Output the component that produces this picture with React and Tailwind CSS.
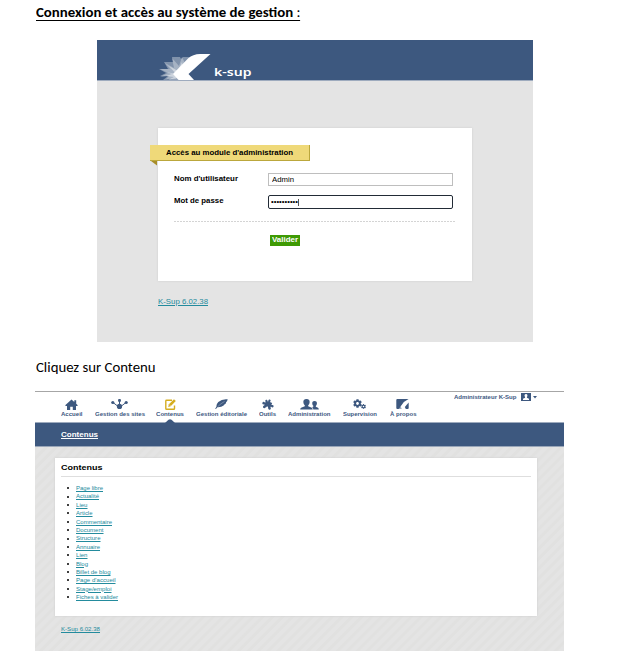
import { useLayoutEffect, useRef, useState } from "react";
import { FaCog } from "react-icons/fa";

// Text stretched or condensed horizontally to a given width.
function Fit({ width, className = "", children }) {
  const ref = useRef(null);
  const [scale, setScale] = useState(1);
  useLayoutEffect(() => {
    const el = ref.current;
    const previous = el.style.transform;
    el.style.transform = "none";
    const natural = el.getBoundingClientRect().width;
    el.style.transform = previous;
    if (natural) setScale(width / natural);
  }, [width]);
  return (
    <span className={"block whitespace-nowrap " + className} style={{ width }}>
      <span ref={ref} className="inline-block origin-left" style={{ transform: `scaleX(${scale})` }}>
        {children}
      </span>
    </span>
  );
}

function Logo() {
  return (
    <svg viewBox="0 0 54 27" className="h-[27px] w-[54px]">
      <g fill="#fff">
        <path opacity=".35" d="M14 4H22l1 2 2-2h7l-1 6-8 14-14 3H5l5-4-8 0 6-3-7-4 9 0L6 9h9z" />
        <path opacity=".3" d="M14 5 21 13 24 4 27 10 31 5 29 14 18 26H8l3-3-9 1 8-4-8-4 10 0L7 10l9 5z" />
        <path opacity=".45" d="M18 21 11 13l9 5 4-9 2 10-6 8H10l6-3-8-1 6-2-6-2z" />
        <path d="M15 21 30 5.500Q35 1 42 1H52.500L30.500 21 36 27H20.500z" />
      </g>
    </svg>
  );
}

function HomeIcon() {
  return (
    <svg viewBox="0 0 13 11" className="h-[11px] w-[13px]" fill="#3d587f">
      <path d="M6.500.5 9.300 3V1.200h1.900v3.500L12.800 6.200 12.300 7H11v4H7.800V7.800H5.200V11H2V7H.7L.2 6.200z" />
    </svg>
  );
}

function EditIcon() {
  return (
    <svg viewBox="0 0 11 11" className="h-[11px] w-[11px]">
      <path d="M7 1.200H1.500Q.8 1.200.8 1.900V9.400Q.8 10.200 1.500 10.200H8.700Q9.500 10.200 9.500 9.400V6.500" fill="none" stroke="#d5ad20" strokeWidth="1.400" />
      <path d="M9 .200 10.800 2 5.700 7.200 3.200 7.900 3.900 5.300z" fill="#d5ad20" />
      <path d="M4.400 5.600 5.400 6.600" stroke="#fff" strokeWidth=".6" />
    </svg>
  );
}

function SitesIcon() {
  return (
    <svg viewBox="0 0 17 10" className="h-[10px] w-[17px]" fill="#3d587f" stroke="#3d587f">
      <path d="M8.500 2v6M2 3.500l6.500 5 6.500-5" fill="none" strokeWidth="1" />
      <circle cx="8.500" cy="1.400" r="1.500" stroke="none" />
      <circle cx="1.800" cy="3.500" r="1.600" stroke="none" />
      <circle cx="15.200" cy="3.500" r="1.600" stroke="none" />
      <circle cx="8.500" cy="7.400" r="2.600" stroke="none" />
    </svg>
  );
}

function FeatherIcon() {
  return (
    <svg viewBox="0 0 13 10" className="h-[10px] w-[13px]">
      <path d="M12.700.300Q7-.300 3.300 3 1.200 5.200 1.500 7.400L.2 9.700l.7.2L2.400 8.300Q6.300 8.500 9 6.200L8.800 5.900Q10.400 5 11.100 3.900L10.900 3.500Q12.500 2.300 12.700.300z" fill="#3d587f" />
      <path d="M2.800 7.600Q6 4.300 9.500 2.500" fill="none" stroke="#fff" strokeWidth=".3" />
    </svg>
  );
}

function PuzzleIcon() {
  return (
    <svg viewBox="0 0 12 11" className="h-[11px] w-[12px]" fill="#3d587f">
      <g transform="rotate(20 6 5.500)">
        <path d="M2.800 2.600h2.400Q4.200.200 6 .200T6.900 2.600h2.500v2.300Q11.900 3.700 11.900 5.600T9.400 6.400v2.700H7.200Q7.300 7.600 6.200 7.600T5.200 9.100H2.800V6.600Q.200 7.800.200 5.800T2.800 4.900z" />
        <circle cx="3.300" cy="9" r="1.300" />
        <circle cx="8.900" cy="8.800" r="1.200" />
        <circle cx="3.200" cy="2.600" r="1.100" />
      </g>
    </svg>
  );
}

function UsersIcon() {
  return (
    <svg viewBox="0 0 19 11" className="h-[11px] w-[19px]" fill="#3d587f">
      <path d="M6.500 0C8.900 0 9.900 1.500 9.600 3.500 9.400 5 8.800 5.600 8.200 6.200v1l3.600 1.500q.9.500.9 1.800H.2q0-1.300.9-1.800L4.800 7.200v-1C4.100 5.600 3.600 5 3.400 3.500 3.100 1.500 4.100 0 6.500 0z" />
      <path d="M14.500 2c1.900 0 2.700 1.200 2.400 2.700-.2 1.300-.7 1.700-1.100 2.200v.8l2.200 1q.8.400.8 1.800h-5.500q0-1.800-1.200-2.300l1.300-.6v-.8c-.6-.5-1-1-1.100-2.100C12 3.200 12.700 2 14.500 2z" />
    </svg>
  );
}

function CogsIcon() {
  return (
    <span className="flex h-[10px] w-[14px]">
      <FaCog className="h-[9px] w-[9px] shrink-0" />
      <span className="flex w-[5px] flex-col justify-end">
        <FaCog className="-ml-px h-[5px] w-[5px]" />
      </span>
    </span>
  );
}

function AboutIcon() {
  return (
    <svg viewBox="0 0 13 10" className="h-[10px] w-[13px]" fill="#3d587f">
      <path d="M1.300 0H12.600Q8 2 5.500 6.300L4.600 7.200 5.800 10H1.300Q.300 10 .300 9V1Q.300 0 1.300 0z" />
      <path d="M12.700 3.500V9Q12.700 10 11.700 10H9.800L8.800 8z" />
      <path d="M2.500 10 5 7.200 7 10z" fill="#fff" opacity=".5" />
    </svg>
  );
}

const nav = [
  ["Accueil", 21.5, "ml-0", <HomeIcon />],
  ["Gestion des sites", 50, "ml-[12px]", <SitesIcon />],
  ["Contenus", 28, "ml-[11.5px]", <EditIcon />],
  ["Gestion éditoriale", 51, "ml-[12px]", <FeatherIcon />],
  ["Outils", 17, "ml-[12px]", <PuzzleIcon />],
  ["Administration", 42.5, "ml-[12px]", <UsersIcon />],
  ["Supervision", 34, "ml-[12.5px]", <CogsIcon />],
  ["À propos", 26.5, "ml-[12.5px]", <AboutIcon />],
];

const links = [
  ["Page libre", 27],
  ["Actualité", 23],
  ["Lieu", 11.5],
  ["Article", 16.5],
  ["Commentaire", 36],
  ["Document", 27.5],
  ["Structure", 24.5],
  ["Annuaire", 24],
  ["Lien", 11.5],
  ["Blog", 12],
  ["Billet de blog", 34.5],
  ["Page d'accueil", 39.5],
  ["Stage/emploi", 35.5],
  ["Fiches à valider", 42],
];

function Login() {
  return (
    <section className="ml-[97px] mt-[16px] h-[302px] w-[436px] bg-[#e4e4e4] text-black">
      <header className="flex h-[41px] border-b border-[#9eabbe] bg-[#3d587f] pl-[61px] pt-[13px]">
        <Logo />
        <Fit width={37.5} className="ml-[2px] mt-[11px] font-['Noto_Sans','DejaVu_Sans',sans-serif] text-[11.500px] font-semibold leading-[15px] text-white">
          k-sup
        </Fit>
      </header>
      <div className="ml-[61px] mt-[47px] h-[153px] w-[314px] bg-white pt-[17px] shadow-[0_0_2px_#ccc]">
        <div className="-ml-[8px] h-[16px] w-[160px] border-b border-r border-[#bba73c] bg-[#efd979] pl-[16px]">
          <Fit width={127} className="text-[7.500px] font-bold leading-[15px]">Accès au module d'administration</Fit>
        </div>
        <svg viewBox="0 0 8 5" className="-ml-[8px] block h-[5px] w-[8px]">
          <path d="M1 0h6v4.500z" fill="#a78d29" />
        </svg>
        <div className="ml-[16px] mt-[7px] flex h-[13px]">
          <Fit width={64} className="mr-[30px] text-[7.500px] font-bold leading-[11px]">Nom d'utilisateur</Fit>
          <div className="h-[13px] w-[185px] border border-[#bebebe] pl-[3px]">
            <Fit width={22} className="text-[7.500px] leading-[12px]">Admin</Fit>
          </div>
        </div>
        <div className="ml-[16px] mt-[9px] flex h-[14px]">
          <Fit width={49.5} className="mr-[44.5px] text-[7.500px] font-bold leading-[12px]">Mot de passe</Fit>
          <div className="flex h-[14px] w-[185px] items-center rounded-[2px] border-[1.5px] border-[#222b36] pl-[2px]">
            <Fit width={27} className="text-[7px] leading-[10px]">••••••••••</Fit>
            <span className="h-[7px] w-px bg-[#555]" />
          </div>
        </div>
        <div className="ml-[16px] mt-[12px] h-px w-[282px] bg-[repeating-linear-gradient(90deg,#d4d4d4_0px,#d4d4d4_2px,#fff_2px,#fff_3px)]" />
        <div className="ml-[112px] mt-[13px] flex h-[11px] w-[30px] justify-center bg-[#3e9a04]">
          <Fit width={26} className="text-[7.500px] font-bold leading-[10.5px] text-white">Valider</Fit>
        </div>
      </div>
      <Fit width={50} className="ml-[61px] mt-[15px] text-[7.500px] leading-[11px] text-[#238b9d] [&>span]:underline">K-Sup 6.02.38</Fit>
    </section>
  );
}

function Admin() {
  return (
    <section className="ml-[35px] mt-[14px] h-[260px] w-[529px] border-t border-[#a6a6a6] bg-[repeating-linear-gradient(135deg,#e4e4e4_0px,#e4e4e4_3px,#e1e1e0_4px,#e1e1e0_6px,#e4e4e4_7px)]">
      <div className="flex h-[31px] border-b border-[#9eabbe] bg-white pl-[26px] text-[#3d587f]">
        {nav.map(([label, width, gap, icon]) => (
          <div key={label} className={"relative flex flex-col items-center " + gap}>
            <div className="mt-[6px] flex h-[12px] items-center">{icon}</div>
            <Fit width={width} className="text-[6px] font-bold leading-[8px]">{label}</Fit>
            {label === "Contenus" && (
              <svg viewBox="0 0 10 4" className="absolute -bottom-px h-[4px] w-[10px]">
                <path d="M0 4 3.500.800Q5-.400 6.500.800L10 4z" fill="#3d587f" />
              </svg>
            )}
          </div>
        ))}
        <div className="ml-[37.5px] flex h-[10px] items-center">
          <Fit width={62.5} className="text-[6px] font-bold leading-[9px]">Administrateur K-Sup</Fit>
          <svg viewBox="0 0 10 8" className="ml-[4.5px] h-[8px] w-[10px]">
            <path d="M0 0h10v8H0z" fill="#3d587f" />
            <path d="M5 1c1.400 0 1.700 1.300 1.300 2.300L5.900 4.200v.6L8 5.800V7H2V5.800l2.100-1v-.6l-.4-.9C3.300 2.300 3.600 1 5 1z" fill="#fff" />
          </svg>
          <svg viewBox="0 0 4 3" className="ml-[2px] h-[3px] w-[4px]">
            <path d="M0 0h4L2 2.500z" fill="#3d587f" />
          </svg>
        </div>
      </div>
      <div className="h-[24px] border-b border-[#99a6b9] bg-[#3d587f] pl-[26px] pt-[7px]">
        <Fit width={37} className="text-[7.500px] font-bold leading-[10px] text-white [&>span]:underline">Contenus</Fit>
      </div>
      <div className="ml-[20px] mt-[11px] h-[158px] w-[482px] bg-white px-[6px] shadow-[0_0_2px_#ccc]">
        <div className="h-[19px] border-b border-[#dedede] pt-[5px]">
          <Fit width={41.5} className="text-[8px] font-bold leading-[10px]">Contenus</Fit>
        </div>
        <ul className="pt-[7px] text-[5.900px] leading-[8.400px]">
          {links.map(([label, width]) => (
            <li key={label} className="flex h-[8.400px] items-center pl-[6px]">
              <span className="mr-[7px] h-[2px] w-[2px] rounded-full bg-black" />
              <Fit width={width} className="text-[#238b9d] [&>span]:underline">{label}</Fit>
            </li>
          ))}
        </ul>
      </div>
      <Fit width={39} className="ml-[26px] mt-[9px] text-[6px] leading-[9px] text-[#238b9d] [&>span]:underline">K-Sup 6.02.38</Fit>
    </section>
  );
}

export default function App() {
  return (
    <main className="flex h-[660px] w-[628px] flex-col overflow-hidden bg-white pt-[6px] font-['Liberation_Sans',Arial,sans-serif] text-black">
      <h1 className="ml-[36px] h-[18px] font-['Carlito','Lato',sans-serif] text-[14px] leading-[14px]">
        <Fit width={264.5} className="[&>span]:border-b [&>span]:border-black">
          <b>Connexion et accès au système de gestion</b> :
        </Fit>
      </h1>
      <Login />
      <p className="ml-[36px] mt-[16px] font-['Carlito','Lato',sans-serif] text-[14px] leading-[19px]">
        <Fit width={119.5}>Cliquez sur Contenu</Fit>
      </p>
      <Admin />
    </main>
  );
}
